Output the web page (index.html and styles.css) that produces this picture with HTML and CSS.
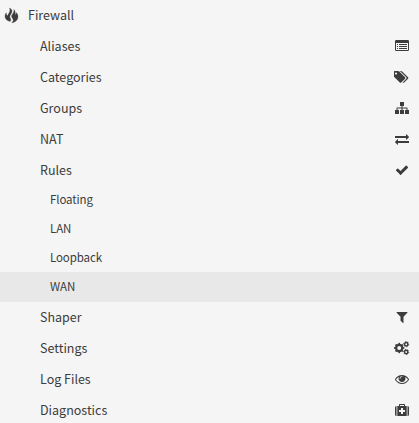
FILE: index.html
```html
<!DOCTYPE html>
<html lang="en">
<head>
<meta charset="utf-8">
<title>Firewall</title>
<link rel="stylesheet" href="styles.css">
</head>
<body>
<nav class="menu">
  <a class="item top"><svg class="flame" viewBox="0 0 13 15"><path d="M4.500 0C7 1 7.800 3.200 6.300 5.500C5.200 7.200 4.500 8.300 5 9.600C5.500 11 6.500 11.800 5.200 13.500C2.200 13 0 11.300 0 8.300C0 6.800 .5 5.600 1.300 4.800C1.400 6.500 1.700 7.600 2.700 7.700C3.600 5 6 3.200 4.500 0ZM8.800 1.500C10.600 3 10.200 5.200 10.400 6.800C11.200 6.500 11.400 5.500 11.200 4.600C12.500 5.600 13 7.200 13 8.800C13 11.800 11 14 6.800 14.800C8.500 13.300 8.600 12 7.600 10.600C6.400 9 6.200 7.800 7.400 6.300C8.600 4.800 9.300 3.500 8.800 1.500Z"/></svg><span>Firewall</span></a>
  <a class="item"><span>Aliases</span><svg class="icon" viewBox="0 0 14 14"><path fill-rule="evenodd" d="M1.200 1h11.600q1.200 0 1.200 1.200v8.600q0 1.200-1.200 1.200H1.200Q0 12 0 10.800V2.200Q0 1 1.200 1ZM1 4v6.700q0 .3.300.3h11.400q.3 0 .3-.3V4ZM2 5h1v1H2ZM4 5h8v1H4ZM2 7h1v1H2ZM4 7h8v1H4ZM2 9h1v1H2ZM4 9h8v1H4Z"/></svg></a>
  <a class="item"><span>Categories</span><svg class="icon tags" viewBox="0 0 1920 1792"><path d="M384 448q0-53-37.500-90.500t-90.500-37.500-90.500 37.500-37.500 90.500 37.500 90.500 90.500 37.500 90.500-37.500 37.500-90.500zm1067 576q0 53-37 90l-491 492q-39 37-91 37-53 0-90-37l-715-716q-38-37-64.500-101t-26.500-117v-416q0-52 38-90t90-38h416q53 0 117 26.500t102 64.500l715 714q37 39 37 91zm384 0q0 53-37 90l-491 492q-39 37-91 37-36 0-59-14t-53-45l470-470q37-37 37-90 0-52-37-91l-715-714q-38-38-102-64.500t-117-26.500h224q53 0 117 26.500t102 64.500l715 714q37 39 37 91z"/></svg></a>
  <a class="item"><span>Groups</span><svg class="icon" viewBox="0 0 14 14"><path d="M5 1h4v4H7.500v1.500H12q.5 0 .5.500v2H14v4h-4V9h1.500V7.500h-4V9H9v4H5V9h1.500V7.500h-4V9H4v4H0V9h1.500V7q0-.5.500-.5h4.500V5H5Z"/></svg></a>
  <a class="item"><span>NAT</span><svg class="icon" viewBox="0 0 1792 1792"><path d="M1792 1184v192q0 13-9.500 22.500t-22.500 9.500h-1376v192q0 13-9.500 22.500t-22.500 9.500q-12 0-24-10l-319-320q-9-9-9-22 0-14 9-23l320-320q9-9 23-9 13 0 22.500 9.500t9.500 22.500v192h1376q13 0 22.500 9.500t9.500 22.500zm0-544q0 14-9 23l-320 320q-9 9-23 9-13 0-22.500-9.500t-9.500-22.500v-192h-1376q-13 0-22.500-9.500t-9.500-22.500v-192q0-13 9.500-22.500t22.500-9.500h1376v-192q0-14 9-23t23-9q12 0 24 10l319 319q9 9 9 23z"/></svg></a>
  <a class="item"><span>Rules</span><svg class="icon" viewBox="0 0 1792 1792"><path d="M1671 566q0 40-28 68l-724 724-136 136q-28 28-68 28t-68-28l-136-136-362-362q-28-28-28-68t28-68l136-136q28-28 68-28t68 28l294 295 656-657q28-28 68-28t68 28l136 136q28 28 28 68z"/></svg></a>
  <div class="submenu">
    <a class="sub">Floating</a>
    <a class="sub">LAN</a>
    <a class="sub">Loopback</a>
    <a class="sub active">WAN</a>
  </div>
  <a class="item"><span>Shaper</span><svg class="icon" viewBox="0 0 1792 1792"><path d="M1595 295q17 41-14 70l-493 493v742q0 42-39 59-13 5-25 5-27 0-45-19l-256-256q-19-19-19-45v-486l-493-493q-31-29-14-70 17-39 59-39h1280q42 0 59 39z"/></svg></a>
  <a class="item"><span>Settings</span><svg class="icon cogs" viewBox="0 0 15 14"><g class="gear"><circle cx="5.200" cy="7" r="3.100" stroke-width="2.200"/><circle cx="5.200" cy="7" r="4.500" stroke-width="1.300" pathLength="16" stroke-dasharray="1 1" stroke-dashoffset=".5"/><circle cx="12.200" cy="3.200" r="1.700" stroke-width="1.500"/><circle cx="12.200" cy="3.200" r="2.600" stroke-width=".8" pathLength="12" stroke-dasharray="1 1"/><circle cx="12.200" cy="11" r="1.700" stroke-width="1.500"/><circle cx="12.200" cy="11" r="2.600" stroke-width=".8" pathLength="12" stroke-dasharray="1 1"/></g></svg></a>
  <a class="item"><span>Log Files</span><svg class="icon" viewBox="0 0 1792 1792"><path d="M1664 960q-152-236-381-353 61 104 61 225 0 185-131.500 316.500t-316.500 131.500-316.500-131.500-131.500-316.500q0-121 61-225-229 117-381 353 133 205 333.500 326.500t434.500 121.500 434.500-121.500 333.500-326.500zm-720-384q0-20-14-34t-34-14q-125 0-214.500 89.500t-89.500 214.500q0 20 14 34t34 14 34-14 14-34q0-86 61-147t147-61q20 0 34-14t14-34zm848 384q0 34-20 69-140 230-376.500 368.500t-499.500 138.500-499.500-139-376.500-368q-20-35-20-69t20-69q140-229 376.500-368t499.500-139 499.500 139 376.500 368q20 35 20 69z"/></svg></a>
  <a class="item"><span>Diagnostics</span><svg class="icon" viewBox="0 0 14 14"><path fill-rule="evenodd" d="M1.500 3v10Q0 13 0 11.500v-7Q0 3 1.500 3ZM12.500 3Q14 3 14 4.500v7q0 1.500-1.500 1.500ZM2.300 3H4V1.800Q4 1 4.800 1h4.400Q10 1 10 1.800V3h1.700v10H2.300ZM5 2v1h4V2ZM6 5v2H4v2h2v2h2V9h2V7H8V5Z"/></svg></a>
</nav>
</body>
</html>
```
FILE: styles.css
```css
body {
  margin: 0;
  background: #f5f5f5;
  color: #3c3c3b;
  font-family: "Noto Sans CJK SC", "Noto Sans", sans-serif;
  font-size: 12.500px;
  overflow: hidden;
}
.menu {
  display: flex;
  flex-direction: column;
}
.item {
  display: flex;
  align-items: center;
  justify-content: space-between;
  box-sizing: border-box;
  height: 31px;
  line-height: 29px;
  padding: 0 10px 2px 40px;
}
.icon {
  width: 14px;
  height: 14px;
  margin-top: 1px;
  fill: #3c3c3b;
}
.top {
  justify-content: flex-start;
  padding-left: 5px;
  gap: 10px;
}
.tags,
.cogs {
  width: 15px;
}
.cogs {
  overflow: visible;
}
.flame {
  width: 13px;
  height: 15px;
  margin-top: 2px;
  fill: #3c3c3b;
  stroke: #3c3c3b;
  stroke-width: 0.3;
  overflow: visible;
}
.gear {
  fill: none;
  stroke: #3c3c3b;
}
.submenu {
  margin-top: -1px;
}
.sub {
  display: block;
  height: 29px;
  line-height: 28px;
  padding-left: 50px;
  font-size: 11.500px;
  letter-spacing: -0.1px;
}
.active {
  height: 30px;
  background: #e8e8e8;
}
```
